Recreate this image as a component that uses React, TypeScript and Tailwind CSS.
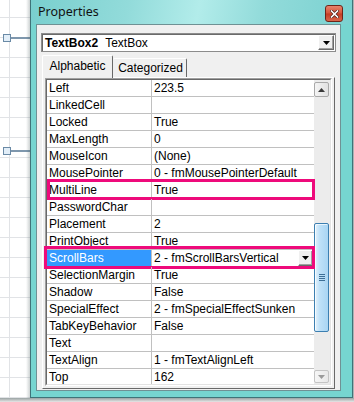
import React from "react";

type Prop = [string, string];

const props: Prop[] = [
  ["Left", "223.5"],
  ["LinkedCell", ""],
  ["Locked", "True"],
  ["MaxLength", "0"],
  ["MouseIcon", "(None)"],
  ["MousePointer", "0 - fmMousePointerDefault"],
  ["MultiLine", "True"],
  ["PasswordChar", ""],
  ["Placement", "2"],
  ["PrintObject", "True"],
  ["ScrollBars", "2 - fmScrollBarsVertical"],
  ["SelectionMargin", "True"],
  ["Shadow", "False"],
  ["SpecialEffect", "2 - fmSpecialEffectSunken"],
  ["TabKeyBehavior", "False"],
  ["Text", ""],
  ["TextAlign", "1 - fmTextAlignLeft"],
  ["Top", "162"],
];

function DownTriangle({ color = "#000" }: { color?: string }) {
  return (
    <svg width="7" height="4" viewBox="0 0 7 4">
      <polygon points="0,0 7,0 3.5,4" fill={color} />
    </svg>
  );
}

function ClassicButton({ className = "" }: { className?: string }) {
  return (
    <div
      className={`flex items-center justify-center border border-t-white border-l-white border-r-[#696969] border-b-[#696969] bg-[#f0f0f0] shadow-[inset_-1px_-1px_0_#a0a0a0] ${className}`}
    >
      <DownTriangle />
    </div>
  );
}

// excel sheet peeking out on the left
function Sheet() {
  return (
    <div className="relative w-[30px] shrink-0 overflow-hidden bg-white">
      <div className="flex flex-col pt-[17px]">
        {Array.from({ length: 20 }).map((_, i) => (
          <div key={i} className="h-[20px] border-t border-[#e1e3e6]" />
        ))}
      </div>
      <div className="absolute inset-y-0 left-[9px] w-px bg-[#e1e3e6]" />

      {/* selection handles of the textbox */}
      <div className="absolute left-[10px] right-0 top-[37px] h-[2px] bg-[#7e97ad]" />
      <div className="absolute left-[3px] top-[34px] h-[8px] w-[8px] border border-[#6a8aa6] bg-[#e2eef8]" />
      <div className="absolute left-[10px] right-0 top-[150px] h-[2px] bg-[#7e97ad]" />
      <div className="absolute left-[3px] top-[147px] h-[8px] w-[8px] border border-[#6a8aa6] bg-[#e2eef8]" />

      <div className="absolute inset-y-0 right-0 w-[4px] bg-[linear-gradient(90deg,rgba(0,0,0,0),rgba(60,80,80,0.25))]" />
    </div>
  );
}

function CloseButton() {
  return (
    <div className="mt-[5px] flex h-[17px] w-[18px] items-center justify-center rounded-[3px] border border-[#6e2418] bg-[linear-gradient(#e8826b,#d4553a_48%,#c23c22_52%,#d9664b)]">
      <svg width="9" height="8" viewBox="0 0 9 8">
        <path d="M1.5 1 L7.5 7 M7.5 1 L1.5 7" stroke="#4a1f18" strokeWidth="3" strokeLinecap="square" />
        <path d="M1.5 1 L7.5 7 M7.5 1 L1.5 7" stroke="#ffffff" strokeWidth="1.6" strokeLinecap="square" />
      </svg>
    </div>
  );
}

function PropRow({ name, value }: { name: string; value: string }) {
  const multi = name === "MultiLine";
  const scroll = name === "ScrollBars";
  return (
    <div className="relative flex h-[17px] shrink-0 border-b border-[#c0c0c0]">
      <div
        className={`w-[105px] shrink-0 border-r border-[#c0c0c0] pl-[2px] leading-[16px] whitespace-nowrap ${
          scroll ? "bg-[#3399ff] text-white" : ""
        }`}
      >
        {name}
      </div>
      <div className="flex min-w-0 flex-1 items-center pl-[2px] leading-[16px] whitespace-nowrap">
        <span className="flex-1">{value}</span>
        {scroll && <ClassicButton className="mr-[1px] h-[16px] w-[15px] self-start" />}
      </div>
      {multi && (
        <div className="pointer-events-none absolute -top-[3px] -bottom-[2px] left-0 -right-[1px] border-[3px] border-[#ee0a7b]" />
      )}
      {scroll && (
        <div className="pointer-events-none absolute -top-[4px] -bottom-[3px] -left-[3px] -right-[1px] border-[3px] border-[#ee0a7b]" />
      )}
    </div>
  );
}

function ScrollBar() {
  return (
    <div className="flex w-[16px] shrink-0 flex-col bg-[#ececec] pt-[2px]">
      <div className="flex h-[15px] w-[15px] items-center justify-center rounded-[2px] border border-[#a9a9a9] bg-[linear-gradient(90deg,#f4f4f4,#e2e2e2)]">
        <svg width="7" height="4" viewBox="0 0 7 4">
          <polygon points="0,4 7,4 3.5,0" fill="#3a3a3a" />
        </svg>
      </div>
      <div className="flex-1">
        <div className="mt-[126px] flex h-[109px] w-[15px] items-center justify-center rounded-[2px] border border-[#3c7fb1] bg-[linear-gradient(90deg,#e4f2fc,#bfe1f8_35%,#a9d5f3)] shadow-[inset_1px_1px_0_rgba(255,255,255,0.7)]">
          <div className="flex flex-col gap-[1px]">
            <div className="h-px w-[6px] bg-[#3d6f96]" />
            <div className="h-px w-[6px] bg-[#3d6f96]" />
            <div className="h-px w-[6px] bg-[#3d6f96]" />
            <div className="h-px w-[6px] bg-[#3d6f96]" />
          </div>
        </div>
      </div>
      <div className="mb-[1px] flex h-[13px] w-[15px] items-center justify-center rounded-[2px] border border-[#c4c4c4] bg-[linear-gradient(90deg,#f6f6f6,#e8e8e8)]">
        <DownTriangle color="#9a9a9a" />
      </div>
    </div>
  );
}

function PropertiesWindow() {
  return (
    <div className="flex h-[398px] w-[323px] shrink-0 flex-col border-x border-b border-[#3f7378] bg-[#76d5d0]">
      <div className="flex h-[24px] shrink-0 items-start justify-between bg-[linear-gradient(100deg,#79cfce_0%,#92dbda_30%,#b2ecea_52%,#92dbda_72%,#7ad1d0_100%)] pl-[7px] pr-[9px]">
        <span className="self-center font-['Noto_Sans',sans-serif] text-[12.5px] leading-none text-[#111]">
          Properties
        </span>
        <CloseButton />
      </div>

      <div className="ml-[5px] flex h-[367px] w-[305px] shrink-0 flex-col border border-[#6f9194] bg-[#f0f0f0] px-[4px]">
        {/* object combo */}
        <div className="mt-[8px] flex h-[19px] shrink-0 border border-[#8c8c8c] bg-white shadow-[inset_1px_1px_0_#6a6a6a]">
          <div className="flex flex-1 items-center gap-[7px] pl-[3px] whitespace-nowrap">
            <span className="font-bold">TextBox2</span>
            <span>TextBox</span>
          </div>
          <ClassicButton className="m-[1px] w-[16px]" />
        </div>

        {/* tabs */}
        <div className="mt-[3px] ml-[1px] flex h-[22px] shrink-0 items-end">
          <div className="relative z-10 -mb-px flex h-[23px] w-[71px] items-center justify-center rounded-t-[2px] border-l border-t border-r border-l-white border-t-white border-r-[#696969] bg-[#f0f0f0] pb-[2px]">
            Alphabetic
          </div>
          <div className="flex h-[19px] w-[74px] items-center justify-center rounded-t-[2px] border-t border-r border-t-white border-r-[#696969] bg-[#f0f0f0] pl-[2px]">
            Categorized
          </div>
        </div>

        {/* tab page */}
        <div className="ml-[1px] mr-[1px] flex shrink-0 flex-col border border-t-white border-l-white border-r-[#696969] border-b-[#696969] px-[2px] pb-[2px]">
          <div className="border border-t-[#a0a0a0] border-l-[#a0a0a0] border-r-white border-b-white">
            <div className="border border-t-[#696969] border-l-[#696969] border-r-[#e3e3e3] border-b-[#e3e3e3]">
              <div className="flex h-[304px] bg-white">
                <div className="flex w-[271px] flex-col [clip-path:inset(-10px_-10px_0_-10px)]">
                  {props.map(([n, v]) => (
                    <PropRow key={n} name={n} value={v} />
                  ))}
                </div>
                <ScrollBar />
              </div>
            </div>
          </div>
        </div>
      </div>
    </div>
  );
}

export default function App() {
  return (
    <div className="flex h-[402px] w-[354px] flex-col overflow-hidden bg-white font-['Liberation_Sans',Arial,sans-serif] text-[12px] leading-none text-black">
      <div className="flex h-[398px] shrink-0">
        <Sheet />
        <PropertiesWindow />
        <div className="w-px bg-[#a9b4b4]" />
      </div>
      <div className="h-[4px] bg-[linear-gradient(#9aa3a3,#e6e6e6)]" />
    </div>
  );
}
